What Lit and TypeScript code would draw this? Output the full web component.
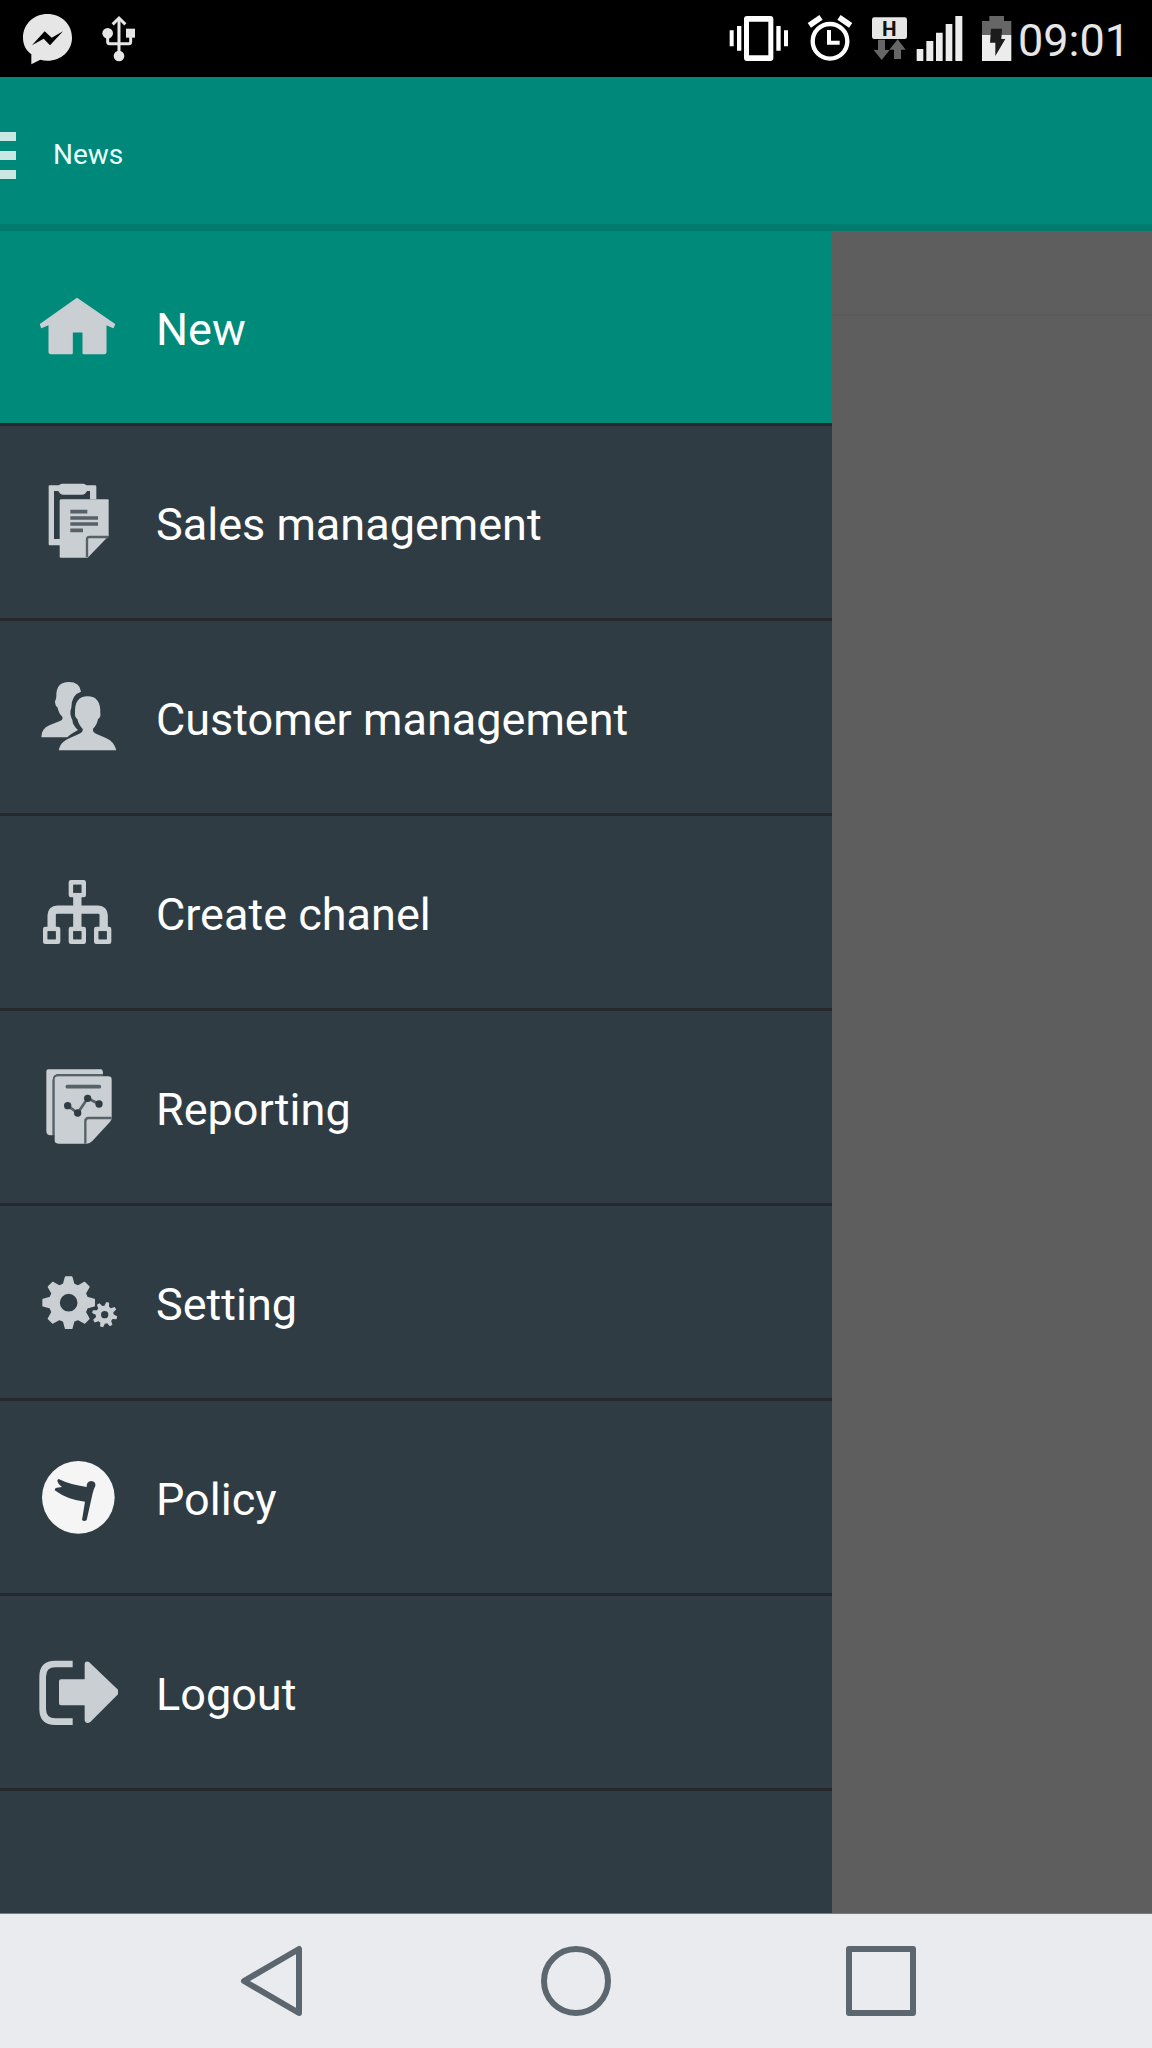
import { LitElement, html, svg, css, nothing, type SVGTemplateResult } from "lit";
import { customElement, property, state } from "lit/decorators.js";
import { classMap } from "lit/directives/class-map.js";

/** Outline of a cog with tapered teeth. */
function cog(cx: number, cy: number, outer: number, root: number, hole: number, teeth: number, turn: number): string {
  const at = (r: number, deg: number) => {
    const a = ((deg + turn) * Math.PI) / 180;
    return `${(cx + r * Math.cos(a)).toFixed(1)} ${(cy + r * Math.sin(a)).toFixed(1)}`;
  };
  const step = 360 / teeth;
  const pts: string[] = [];
  for (let i = 0; i < teeth; i++) {
    const m = i * step;
    pts.push(at(root, m - step * 0.34), at(outer, m - step * 0.15), at(outer, m + step * 0.15), at(root, m + step * 0.34));
  }
  return `M${pts.join("L")}ZM${cx - hole} ${cy}a${hole} ${hole} 0 1 0 ${hole * 2} 0a${hole} ${hole} 0 1 0 ${-hole * 2} 0Z`;
}

interface Icon {
  box: string;
  art: SVGTemplateResult;
}

const ICONS: Record<string, Icon> = {
  home: {
    box: "54 51 240 240",
    art: svg`<path class="fill join" d="M171 86 L283 163 L279 172 L257 162 V247 Q257 250 254 250 H190 V188 Q190 185 186 185 H160 Q156 185 156 188 V250 H91 Q88 250 88 247 V162 L65 172 L62 163 Z"/>`,
  },
  sales: {
    box: "54 66 240 240",
    art: svg`
      <path class="fill" fill-rule="evenodd" d="M89 76 H117 Q120 71 126 71 H190 Q196 71 199 76 H225 Q229 76 229 80 V118 H210 V93 H201 Q196 104 186 104 H130 Q120 104 115 93 H102 V237 H121 V256 H89 Q86 256 86 253 V79 Q86 76 89 76 Z"/>
      <path class="fill" d="M124 118 H263 Q266 118 266 121 V228 L203 293 H122 Q119 293 119 290 V122 Q119 118 124 118 Z"/>
      <path class="ink" stroke-width="7" d="M201 292 V238 Q201 231 208 231 H265"/>
      <path class="ink" stroke-width="11" d="M151 155 H202 M151 174 H234 M151 192 H234 M151 211 H189"/>`,
  },
  customers: {
    box: "54 51 240 240",
    art: svg`
      <path class="fill" d="M64 232 Q64 206 88 196 L120 183 Q130 179 127 170 Q116 160 113 143 Q105 138 105 124 Q109 118 109 108 Q108 66 146 66 Q180 66 183 95 Q154 104 154 143 Q147 160 157 180 Q158 196 174 210 Q152 222 142 232 Z"/>
      <path class="fill" d="M116 271 Q120 246 148 235 L178 221 Q190 216 188 206 Q176 195 172 177 Q164 172 165 159 Q163 109 203 109 Q242 109 241 159 Q243 172 234 177 Q231 195 219 206 Q217 216 228 221 L256 233 Q282 243 289 271 Z"/>`,
  },
  channel: {
    box: "54 36 240 240",
    art: svg`
      <path class="line" stroke-width="25" d="M172 108 V204 M95 204 V166 Q95 149 112 149 H234 Q251 149 251 166 V204"/>
      <path class="line" stroke-width="14" stroke-linejoin="round" d="M153 67 H191 V105 H153 Z M76 207 H114 V245 H76 Z M153 207 H191 V245 H153 Z M229 207 H267 V245 H229 Z"/>
      <path class="dark" d="M160 74 H184 V98 H160 Z M83 214 H107 V238 H83 Z M160 214 H184 V238 H160 Z M236 214 H260 V238 H236 Z"/>`,
  },
  report: {
    box: "54 51 240 240",
    art: svg`
      <path class="fill" d="M85 58 H243 Q249 58 249 72 H117 Q98 72 98 91 V256 H92 Q79 256 79 243 V64 Q79 58 85 58 Z"/>
      <path class="ink" stroke-width="6" d="M101 256 V93 Q101 75 119 75 H249"/>
      <path class="fill" d="M115 79 H265 Q275 79 275 89 V204 Q275 211 269 217 L217 273 Q209 281 200 281 H115 Q104 281 104 271 V89 Q104 79 115 79 Z"/>
      <path class="ink" stroke-width="7" d="M196 281 V214 Q196 204 206 204 H275"/>
      <path class="ink" stroke-width="11" stroke-linecap="round" d="M142 110 H238"/>
      <path class="ink" stroke-width="8" d="M143 167 L173 189 L203 145 L237 162"/>
      <path class="dark" d="M132 167 a11 11 0 1 0 22 0 a11 11 0 1 0 -22 0 M162 189 a11 11 0 1 0 22 0 a11 11 0 1 0 -22 0 M192 145 a11 11 0 1 0 22 0 a11 11 0 1 0 -22 0 M226 162 a11 11 0 1 0 22 0 a11 11 0 1 0 -22 0"/>`,
  },
  settings: {
    box: "54 36 240 240",
    art: svg`
      <path class="fill join" fill-rule="evenodd" d=${cog(146, 158, 77, 57, 29, 8, 0)}/>
      <path class="fill" fill-rule="evenodd" d=${cog(254, 194, 38, 27, 11, 8, 14)}/>`,
  },
  policy: {
    box: "54 51 240 240",
    art: svg`
      <circle class="paper" cx="175" cy="172" r="109"/>
      <path class="dark" d="M116 117 Q150 134 200 141 Q199 124 214 123 Q228 125 226 138 Q221 147 218 160 L200 240 Q193 246 186 240 L195 185 Q145 181 104 151 Q104 144 110 143 L126 141 Q112 130 112 120 Z"/>`,
  },
  logout: {
    box: "54 36 240 240",
    art: svg`
      <path class="line" stroke-width="20" stroke-linejoin="round" d="M158 72 H106 Q68 72 68 110 V207 Q68 245 106 245 H158"/>
      <path class="fill" d="M123 118 H194 V71 Q196 61 207 66 L294 149 Q299 156 294 163 L211 246 Q199 253 194 242 V196 H123 Q117 196 117 190 V124 Q117 118 123 118 Z"/>`,
  },
};

@customElement("menu-icon")
class MenuIcon extends LitElement {
  @property() name = "home";

  static styles = css`
    :host { display: block; flex: none; width: 80px; height: 80px; }
    svg { display: block; width: 100%; height: 100%; }
    .fill { fill: #c9cfd2; }
    .join { stroke: #c9cfd2; stroke-width: 5; stroke-linejoin: round; }
    .line { fill: none; stroke: #c9cfd2; }
    .ink { fill: none; stroke: #566168; }
    .dark { fill: #2f3c43; }
    .paper { fill: #f5f5f5; }
  `;

  render() {
    const icon = ICONS[this.name];
    return icon ? html`<svg viewBox=${icon.box} aria-hidden="true">${icon.art}</svg>` : nothing;
  }
}

@customElement("status-bar")
class StatusBar extends LitElement {
  static styles = css`
    :host {
      display: flex;
      align-items: center;
      justify-content: space-between;
      height: 77px;
      padding: 0 22px;
      background: #000;
      color: #e6e6e6;
      font-family: Roboto, "Liberation Sans", sans-serif;
    }
    .side { display: flex; align-items: center; gap: 18px; }
    .notices { gap: 28px; }
    .pair { display: flex; align-items: center; gap: 8px; }
    .power { gap: 6px; }
    svg { display: block; height: 47px; }
    .messenger { width: 52px; height: 52px; }
    .usb { width: 34px; }
    .vibrate { width: 60px; }
    .alarm { width: 46px; }
    .data { width: 37px; }
    .signal { width: 47px; }
    .battery { width: 31px; }
    .badge { font: 700 62px Roboto, sans-serif; fill: #111; }
    .time { padding-top: 4px; font-size: 45px; line-height: 52px; font-weight: 400; }
  `;

  render() {
    return html`
      <div class="side notices">
        <svg class="messenger" viewBox="66 39 156 156" aria-hidden="true">
          <path fill="#e6e6e6" d="M142 42 C101 42 69 73 69 113 C69 134 78 151 94 163 V193 L121 179 Q131 182 142 182 C184 182 216 152 216 113 C216 73 184 42 142 42 Z"/>
          <path fill="#000" d="M96 136 L134 94 L155 113 L189 94 L150 136 L131 116 Z"/>
        </svg>
        <svg class="usb" viewBox="306 45 102 141" aria-hidden="true">
          <g fill="none" stroke="#e6e6e6" stroke-width="9">
            <path d="M357 54 V168 M323 100 V125 Q323 131 329 131 H386 Q392 131 392 125 V100"/>
            <path d="M338 73 L357 54 L376 73"/>
          </g>
          <circle cx="323" cy="100" r="16" fill="#e6e6e6"/>
          <circle cx="357" cy="168" r="16" fill="#e6e6e6"/>
          <path fill="#e6e6e6" d="M378 86 H405 V113 H378 Z"/>
        </svg>
      </div>
      <div class="side">
        <svg class="vibrate" viewBox="93 45 180 141" aria-hidden="true">
          <path fill="#fff" fill-rule="evenodd" d="M147 48 H217 Q226 48 226 57 V174 Q226 183 217 183 H147 Q138 183 138 174 V57 Q138 48 147 48 Z M153 65 V166 H211 V65 Z M95 91 H107 V139 H95 Z M117 78 H130 V152 H117 Z M235 78 H248 V152 H235 Z M258 91 H270 V139 H258 Z"/>
        </svg>
        <svg class="alarm" viewBox="325 45 138 141" aria-hidden="true">
          <g fill="none" stroke="#fff">
            <circle cx="394" cy="124" r="52" stroke-width="13"/>
            <path stroke-width="12" d="M391 90 V128 H423"/>
            <path stroke-width="17" d="M332 76 L367 52 M456 76 L421 52"/>
          </g>
        </svg>
        <div class="pair">
          <svg class="data" viewBox="516 45 111 141" aria-hidden="true">
            <rect x="519" y="52" width="105" height="65" rx="7" fill="#e6e6e6"/>
            <text class="badge" x="571" y="107" text-anchor="middle">H</text>
            <path fill="#666" d="M537 119 H558 V150 H572 L548 180 L524 150 H537 Z M585 177 V149 H571 L596 118 L620 149 H606 V177 Z"/>
          </svg>
          <svg class="signal" viewBox="650 45 141 141" aria-hidden="true">
            <path fill="#ececec" d="M652 147 H672 V183 H652 Z M681 123 H702 V183 H681 Z M710 98 H730 V183 H710 Z M739 72 H759 V183 H739 Z M768 48 H789 V183 H768 Z"/>
          </svg>
        </div>
        <div class="pair power">
          <svg class="battery" viewBox="846 45 93 141" aria-hidden="true">
            <path fill="#666" d="M871 48 H915 V63 H937 V105 H849 V63 H871 Z"/>
            <path fill="#ececec" d="M849 105 H937 V183 H849 Z"/>
            <path fill="#1c1c1c" d="M876 86 H909 L907 117 H919 L889 168 V128 H873 Z"/>
          </svg>
          <time class="time">09:01</time>
        </div>
      </div>
    `;
  }
}

@customElement("system-nav")
class SystemNav extends LitElement {
  static styles = css`
    :host {
      display: grid;
      grid-template-columns: repeat(3, 1fr);
      justify-items: center;
      align-items: center;
      height: 134px;
      padding: 0 118px;
      background: #e9ebee;
      border-top: 1px solid #737d84;
    }
    button { padding: 0; border: 0; background: none; cursor: pointer; }
    svg { display: block; width: 76px; height: 76px; fill: none; stroke: #5b666e; stroke-width: 6; stroke-linejoin: round; }
  `;

  render() {
    return html`
      <button aria-label="Back"><svg viewBox="0 0 76 76"><path d="M66 6 V70 L11 38 Z"/></svg></button>
      <button aria-label="Home"><svg viewBox="0 0 76 76"><circle cx="38" cy="38" r="32"/></svg></button>
      <button aria-label="Recent apps"><svg viewBox="0 0 76 76"><path d="M6 6 H70 V70 H6 Z"/></svg></button>
    `;
  }
}

const ITEMS = [
  { icon: "home", label: "New" },
  { icon: "sales", label: "Sales management" },
  { icon: "customers", label: "Customer management" },
  { icon: "channel", label: "Create chanel" },
  { icon: "report", label: "Reporting" },
  { icon: "settings", label: "Setting" },
  { icon: "policy", label: "Policy" },
  { icon: "logout", label: "Logout" },
];

@customElement("app-root")
class AppRoot extends LitElement {
  @state() private selected = 0;

  static styles = css`
    :host {
      display: flex;
      flex-direction: column;
      min-height: 100vh;
      font-family: Roboto, "Liberation Sans", sans-serif;
      color: #fff;
    }
    button { font: inherit; color: inherit; border: 0; cursor: pointer; }
    .bar {
      box-sizing: border-box;
      display: flex;
      align-items: center;
      gap: 37px;
      height: 154px;
      padding-top: 2px;
      background: #00897a;
      box-shadow: inset 0 -7px #007b6d;
    }
    .toggle { padding: 0; background: none; }
    .toggle svg { display: block; width: 16px; height: 48px; fill: #c9e8e3; }
    .title { margin: 0; font-size: 28px; line-height: 34px; font-weight: 400; color: #e8fffc; }
    .body { flex: 1; display: grid; grid-template-columns: 13fr 5fr; }
    .drawer { background: #2f3c44; }
    .list { margin: 0; padding: 0; list-style: none; }
    .entry { border-bottom: 3px solid #25292d; }
    .item {
      display: flex;
      align-items: center;
      gap: 38px;
      width: 100%;
      height: 192px;
      padding: 0 38px;
      background: none;
      text-align: left;
    }
    .item.active { background: #008a7a; }
    .label { padding-top: 5px; font-size: 45px; line-height: 52px; }
    .scrim { background: #5e5e5e; }
    .peek { height: 83px; border-bottom: 2px solid #5b5b5b; }
  `;

  render() {
    return html`
      <status-bar></status-bar>
      <header class="bar">
        <button class="toggle" aria-label="Menu">
          <svg viewBox="0 0 16 48"><path d="M0 1 H16 V10 H0 Z M0 20 H16 V29 H0 Z M0 39 H16 V48 H0 Z"/></svg>
        </button>
        <h1 class="title">News</h1>
      </header>
      <div class="body">
        <nav class="drawer">
          <ul class="list">
            ${ITEMS.map(
              (item, i) => html`
                <li class="entry">
                  <button
                    class=${classMap({ item: true, active: i === this.selected })}
                    @click=${() => (this.selected = i)}
                  >
                    <menu-icon name=${item.icon}></menu-icon>
                    <span class="label">${item.label}</span>
                  </button>
                </li>
              `,
            )}
          </ul>
        </nav>
        <main class="scrim"><div class="peek"></div></main>
      </div>
      <system-nav></system-nav>
    `;
  }
}
